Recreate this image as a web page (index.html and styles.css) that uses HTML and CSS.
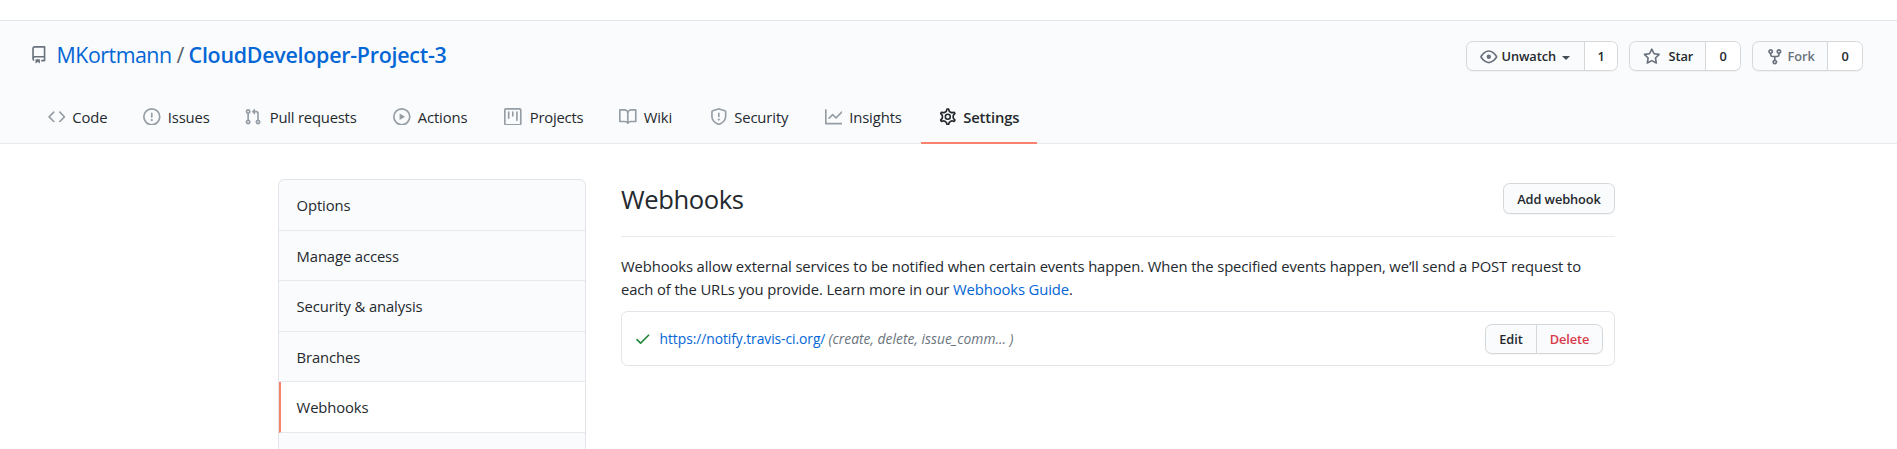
FILE: index.html
```html
<!DOCTYPE html>
<html lang="en">
<head>
<meta charset="utf-8">
<title>Webhooks</title>
<link rel="stylesheet" href="styles.css">
</head>
<body>
<header class="repo-head">
  <div class="title-row">
    <h1 class="repo-title">
      <svg class="icon repo-icon" viewBox="0 0 16 16"><path fill-rule="evenodd" d="M2 2.5A2.5 2.5 0 014.500 0h8.750a.75.75 0 01.75.75v12.500a.75.75 0 01-.75.75h-2.500a.75.75 0 110-1.500h1.750v-2h-8a1 1 0 00-.714 1.700.75.75 0 01-1.072 1.050A2.495 2.495 0 012 11.500v-9zm10.500-1V9h-8c-.356 0-.694.074-1 .208V2.500a1 1 0 011-1h8zM5 12.250v3.250a.25.25 0 00.4.2l1.450-1.087a.25.25 0 01.3 0L8.600 15.700a.25.25 0 00.4-.2v-3.250a.25.25 0 00-.25-.25h-3.500a.25.25 0 00-.25.25z"/></svg>
      <a class="owner">MKortmann</a><span class="slash">/</span><a class="repo">CloudDeveloper-Project-3</a>
    </h1>
    <div class="actions">
      <div class="btn-group watch">
        <a class="btn"><svg class="icon" viewBox="0 0 16 16"><path fill-rule="evenodd" d="M1.679 7.932c.412-.621 1.242-1.750 2.366-2.717C5.175 4.242 6.527 3.500 8 3.500c1.473 0 2.824.742 3.955 1.715 1.124.967 1.954 2.096 2.366 2.717a.119.119 0 010 .136c-.412.621-1.242 1.750-2.366 2.717C10.825 11.758 9.473 12.500 8 12.500c-1.473 0-2.824-.742-3.955-1.715C2.920 9.818 2.090 8.690 1.679 8.068a.119.119 0 010-.136zM8 2c-1.981 0-3.670.992-4.933 2.078C1.797 5.169.880 6.423.430 7.100a1.619 1.619 0 000 1.798c.450.678 1.367 1.932 2.637 3.024C4.329 13.008 6.019 14 8 14c1.981 0 3.670-.992 4.933-2.078 1.270-1.091 2.187-2.345 2.637-3.023a1.619 1.619 0 000-1.798c-.450-.678-1.367-1.932-2.637-3.023C11.671 2.992 9.981 2 8 2zm0 8a2 2 0 100-4 2 2 0 000 4z"/></svg><span>Unwatch</span><i class="caret"></i></a><a class="count">1</a>
      </div>
      <div class="btn-group star">
        <a class="btn"><svg class="icon" viewBox="0 0 16 16"><path fill-rule="evenodd" d="M8 .25a.75.75 0 01.673.418l1.882 3.815 4.210.612a.75.75 0 01.416 1.279l-3.046 2.970.719 4.192a.75.75 0 01-1.088.791L8 12.347l-3.766 1.980a.75.75 0 01-1.088-.790l.720-4.194L.818 6.374a.75.75 0 01.416-1.280l4.210-.611L7.327.668A.75.75 0 018 .25zm0 2.445L6.615 5.500a.75.75 0 01-.564.410l-3.097.450 2.240 2.184a.75.75 0 01.216.664l-.528 3.084 2.769-1.456a.75.75 0 01.698 0l2.770 1.456-.530-3.084a.75.75 0 01.216-.664l2.240-2.183-3.096-.450a.75.75 0 01-.564-.410L8 2.694v.001z"/></svg><span>Star</span></a><a class="count">0</a>
      </div>
      <div class="btn-group fork">
        <a class="btn"><svg class="icon" viewBox="0 0 16 16"><path fill-rule="evenodd" d="M5 3.250a.75.75 0 11-1.500 0 .75.75 0 011.500 0zm0 2.122a2.250 2.250 0 10-1.500 0v.878A2.250 2.250 0 005.750 8.500h1.500v2.128a2.251 2.251 0 101.500 0V8.500h1.500a2.250 2.250 0 002.250-2.250v-.878a2.250 2.250 0 10-1.500 0v.878a.75.75 0 01-.75.75h-4.500A.75.75 0 015 6.250v-.878zm3.750 7.378a.75.75 0 11-1.500 0 .75.75 0 011.500 0zm3-8.750a.75.75 0 100-1.500.75.75 0 000 1.500z"/></svg><span>Fork</span></a><a class="count">0</a>
      </div>
    </div>
  </div>
  <nav class="tabs">
    <a class="tab code"><svg class="icon" viewBox="0 0 16 16"><path fill-rule="evenodd" d="M4.720 3.220a.75.75 0 011.060 1.060L2.060 8l3.720 3.720a.75.75 0 11-1.060 1.060L.470 8.530a.75.75 0 010-1.060l4.250-4.250zm6.560 0a.75.75 0 10-1.060 1.060L13.940 8l-3.720 3.720a.75.75 0 101.060 1.060l4.250-4.250a.75.75 0 000-1.060l-4.250-4.250z"/></svg><span>Code</span></a>
    <a class="tab issues"><svg class="icon" viewBox="0 0 16 16"><path fill-rule="evenodd" d="M8 1.500a6.500 6.500 0 100 13 6.500 6.500 0 000-13zM0 8a8 8 0 1116 0A8 8 0 010 8zm9 3a1 1 0 11-2 0 1 1 0 012 0zm-.25-6.250a.75.75 0 00-1.500 0v3.500a.75.75 0 001.500 0v-3.500z"/></svg><span>Issues</span></a>
    <a class="tab pulls"><svg class="icon" viewBox="0 0 16 16"><path fill-rule="evenodd" d="M7.177 3.073L9.573.677A.25.25 0 0110 .854v4.792a.25.25 0 01-.427.177L7.177 3.427a.25.25 0 010-.354zM3.750 2.500a.75.75 0 100 1.500.75.75 0 000-1.500zm-2.250.75a2.250 2.250 0 113 2.122v5.256a2.251 2.251 0 11-1.500 0V5.372A2.250 2.250 0 011.500 3.250zM11 2.500h-1V4h1a1 1 0 011 1v5.628a2.251 2.251 0 101.500 0V5A2.500 2.500 0 0011 2.500zm1 10.250a.75.75 0 111.500 0 .75.75 0 01-1.500 0zM3.750 12a.75.75 0 100 1.500.75.75 0 000-1.500z"/></svg><span>Pull requests</span></a>
    <a class="tab acts"><svg class="icon" viewBox="0 0 16 16"><path fill-rule="evenodd" d="M1.500 8a6.500 6.500 0 1113 0 6.500 6.500 0 01-13 0zM8 0a8 8 0 100 16A8 8 0 008 0zM6.379 5.227A.25.25 0 006 5.442v5.117a.25.25 0 00.379.214l4.264-2.559a.25.25 0 000-.428L6.379 5.227z"/></svg><span>Actions</span></a>
    <a class="tab projects"><svg class="icon" viewBox="0 0 16 16"><path fill-rule="evenodd" d="M1.750 0A1.750 1.750 0 000 1.750v12.500C0 15.216.784 16 1.750 16h12.500A1.750 1.750 0 0016 14.250V1.750A1.750 1.750 0 0014.250 0H1.750zM1.500 1.750a.25.25 0 01.25-.25h12.500a.25.25 0 01.25.25v12.500a.25.25 0 01-.25.25H1.750a.25.25 0 01-.25-.25V1.750zM11.750 3a.75.75 0 00-.75.75v7.500a.75.75 0 001.500 0v-7.500a.75.75 0 00-.75-.75zm-8.250.75a.75.75 0 011.500 0v5.500a.75.75 0 01-1.500 0v-5.500zM8 3a.75.75 0 00-.75.75v3.500a.75.75 0 001.500 0v-3.500A.75.75 0 008 3z"/></svg><span>Projects</span></a>
    <a class="tab wiki"><svg class="icon" viewBox="0 0 16 16"><path fill-rule="evenodd" d="M0 1.750A.75.75 0 01.75 1h4.253c1.227 0 2.317.590 3 1.501A3.744 3.744 0 0111.006 1h4.245a.75.75 0 01.75.75v10.500a.75.75 0 01-.75.75h-4.507a2.250 2.250 0 00-1.591.659l-.622.621a.75.75 0 01-1.060 0l-.622-.621A2.250 2.250 0 005.258 13H.75a.75.75 0 01-.75-.75V1.750zm8.755 3a2.250 2.250 0 012.250-2.250H14.500v9h-3.757c-.710 0-1.400.201-1.992.572l.004-7.322zm-1.504 7.324l.004-5.073-.002-2.253A2.250 2.250 0 005.003 2.500H1.500v9h3.757a3.750 3.750 0 011.994.574z"/></svg><span>Wiki</span></a>
    <a class="tab security"><svg class="icon" viewBox="0 0 16 16"><path fill-rule="evenodd" d="M7.467.133a1.750 1.750 0 011.066 0l5.250 1.680A1.750 1.750 0 0115 3.480V7c0 1.566-.320 3.182-1.303 4.682-.983 1.498-2.585 2.813-5.032 3.855a1.700 1.700 0 01-1.330 0c-2.447-1.042-4.049-2.357-5.032-3.855C1.320 10.182 1 8.566 1 7V3.480a1.750 1.750 0 011.217-1.667l5.250-1.680zm.610 1.429a.25.25 0 00-.153 0l-5.250 1.680a.25.25 0 00-.174.238V7c0 1.358.275 2.666 1.057 3.860.784 1.194 2.121 2.340 4.366 3.297a.2.2 0 00.154 0c2.245-.956 3.582-2.104 4.366-3.298C13.225 9.666 13.500 8.360 13.500 7V3.480a.25.25 0 00-.174-.237l-5.250-1.680zM9 10.500a1 1 0 11-2 0 1 1 0 012 0zm-.25-5.750a.75.75 0 10-1.500 0v3a.75.75 0 001.500 0v-3z"/></svg><span>Security</span></a>
    <a class="tab insights"><svg class="icon" viewBox="0 0 16 16"><path fill-rule="evenodd" d="M1.500 1.750a.75.75 0 00-1.500 0v12.500c0 .414.336.75.75.75h14.500a.75.75 0 000-1.500H1.500V1.750zm14.280 2.530a.75.75 0 00-1.060-1.060L10 7.940 7.530 5.470a.75.75 0 00-1.060 0L3.220 8.720a.75.75 0 001.060 1.060L7 7.060l2.470 2.470a.75.75 0 001.060 0l5.250-5.250z"/></svg><span>Insights</span></a>
    <a class="tab settings selected"><svg class="icon" viewBox="0 0 16 16"><g fill="none" stroke="currentColor" stroke-width="1.4"><path transform="translate(8 8) scale(1.09) translate(-8 -8)" d="M7.429 1.525a6.593 6.593 0 011.142 0c.036.003.108.036.137.146l.289 1.105c.147.56.55.967.997 1.189.174.086.341.183.501.29.417.278.97.423 1.530.27l1.102-.303c.110-.030.175.016.195.046.219.310.410.641.573.989.014.031.022.110-.059.190l-.815.806c-.411.406-.562.957-.530 1.456a4.588 4.588 0 010 .582c-.032.499.119 1.050.530 1.456l.815.806c.080.080.073.159.059.190a6.494 6.494 0 01-.573.990c-.020.029-.086.074-.195.045l-1.103-.303c-.559-.153-1.112-.008-1.529.270-.160.107-.327.204-.500.290-.449.222-.851.628-.998 1.189l-.289 1.105c-.029.110-.101.143-.137.146a6.613 6.613 0 01-1.142 0c-.036-.003-.108-.037-.137-.146l-.289-1.105c-.147-.560-.550-.967-.997-1.189a4.502 4.502 0 01-.501-.290c-.417-.278-.970-.423-1.530-.270l-1.102.303c-.110.030-.175-.016-.195-.046a6.492 6.492 0 01-.573-.989c-.014-.031-.022-.110.059-.190l.815-.806c.411-.406.562-.957.530-1.456a4.587 4.587 0 010-.582c.032-.499-.119-1.050-.530-1.456l-.815-.806c-.080-.080-.073-.159-.059-.190a6.440 6.440 0 01.573-.990c.020-.029.086-.075.195-.045l1.103.303c.559.153 1.112.008 1.529-.270.160-.107.327-.204.500-.290.449-.222.851-.628.998-1.189l.289-1.105c.029-.110.101-.143.137-.146z"/><circle cx="8" cy="8" r="2.250"/></g></svg><span>Settings</span></a>
  </nav>
</header>
<main class="page">
  <aside class="menu">
    <a>Options</a>
    <a>Manage access</a>
    <a>Security &amp; analysis</a>
    <a>Branches</a>
    <a class="current">Webhooks</a>
    <div class="menu-rest"></div>
  </aside>
  <section class="content">
    <div class="subhead">
      <h2>Webhooks</h2>
      <a class="btn add">Add webhook</a>
    </div>
    <p class="intro"><span class="l1">Webhooks allow external services to be notified when certain events happen. When the specified events happen, we’ll send a POST request to</span><br><span class="l2">each of the URLs you provide. Learn more in our <a class="link">Webhooks Guide</a>.</span></p>
    <div class="hook">
      <svg class="icon check" viewBox="0 0 16 16"><path fill-rule="evenodd" d="M13.780 4.220a.75.75 0 010 1.060l-7.250 7.250a.75.75 0 01-1.060 0L2.220 9.280a.75.75 0 011.060-1.060L6 10.940l6.720-6.720a.75.75 0 011.060 0z"/></svg>
      <a class="url">https://notify.travis-ci.org/</a>
      <em class="events">(create, delete, issue_comm... )</em>
      <div class="btn-group hook-actions"><a class="btn">Edit</a><a class="btn danger">Delete</a></div>
    </div>
  </section>
</main>
</body>
</html>
```
FILE: styles.css
```css
* { box-sizing: border-box; }
body {
  margin: 0;
  height: 449px;
  overflow: hidden;
  background: #fff;
  color: #24292e;
  font: 14.8px/23.1px "Open Sans", "Noto Sans", sans-serif;
  letter-spacing: -.11px;
}
.icon { width: 17.6px; height: 17.6px; flex: none; fill: currentColor; }
span, a, em { white-space: nowrap; }

.repo-head {
  margin-top: 20px;
  height: 124px;
  display: flex;
  flex-direction: column;
  justify-content: space-between;
  background: #fafbfc;
  border-top: 1px solid #e1e4e8;
  border-bottom: 1px solid #e8eaed;
}
.title-row {
  display: flex;
  justify-content: space-between;
  padding: 17px 34px 0 30px;
}
.repo-title {
  display: flex;
  align-items: center;
  margin: 0;
  height: 34px;
  font-size: 21.4px;
  font-weight: 400;
  color: #0366d6;
}
.repo-icon { color: #6a737d; margin-right: 9px; }
.owner { width: 119px; letter-spacing: -.5px; }
.slash { width: 13px; padding-left: 1px; color: #586069; }
.repo { font-weight: 600; letter-spacing: -.25px; }

.actions { display: flex; gap: 11px; margin-top: 3px; height: 30px; }
.btn-group {
  display: flex;
  height: 30px;
  border: 1px solid #d5d8da;
  border-radius: 6.6px;
  background: #fafbfc;
  box-shadow: 0 1px 0 rgba(27, 31, 35, .04);
  overflow: hidden;
}
.btn, .count {
  display: flex;
  align-items: center;
  padding-top: 1px;
  font-size: 12.8px;
  font-weight: 600;
  letter-spacing: -.1px;
}
.btn .icon { color: #6a737d; }
.count { flex: 1; justify-content: center; background: #fff; border-left: 1px solid #d5d8da; }
.watch { width: 152px; }
.watch .btn { width: 117px; padding-left: 13px; gap: 4px; }
.watch span { width: 52px; }
.caret { margin: 2px 0 0 4px; border: 4.400px solid transparent; border-top-color: #444d56; border-bottom: 0; }
.star { width: 112px; }
.star .btn { width: 75px; padding-left: 13px; gap: 8px; }
.fork { width: 111px; }
.fork .btn { width: 74px; padding-left: 13px; gap: 4px; color: #6a737d; }

.tabs { display: flex; height: 53px; padding-left: 30px; margin-bottom: -1px; }
.tab {
  display: flex;
  align-items: center;
  gap: 7px;
  padding-left: 17.6px;
  border-bottom: 2px solid transparent;
}
.tab span { padding-top: 2px; }
.tab .icon { color: #959da5; }
.tab.code { width: 95.5px; }
.tab.issues { width: 101px; }
.tab.pulls { width: 149px; gap: 8px; letter-spacing: -.2px; }
.tab.acts { width: 111px; }
.tab.projects { width: 115px; gap: 8px; letter-spacing: -.2px; }
.tab.wiki { width: 90.5px; }
.tab.security { width: 115px; }
.tab.insights { width: 114px; }
.tab.settings { width: 116px; }
.tab.selected { font-weight: 600; letter-spacing: -.15px; border-bottom-color: #f9826c; }
.tab.selected .icon { color: #24292e; }

.page { display: flex; gap: 35px; width: 1337px; height: 270px; margin: 35px 0 0 278px; }
.menu {
  width: 308px;
  flex: none;
  border: 1px solid #e1e4e8;
  border-bottom: 0;
  border-radius: 6.6px 6.6px 0 0;
  background: #fafbfc;
  overflow: hidden;
}
.menu a {
  display: block;
  height: 50.5px;
  padding: 14px 17.6px 0;
  border-bottom: 1px solid #e6e9ec;
}
.menu .current { background: #fff; border-left: 2px solid #f9826c; padding-left: 15.6px; }
.menu-rest { height: 16px; }

.content { flex: 1; }
.subhead {
  display: flex;
  justify-content: space-between;
  height: 58px;
  border-bottom: 1px solid #e8eaed;
}
h2 { margin: 0; font-size: 25.6px; line-height: 42px; font-weight: 400; letter-spacing: -.4px; }
.add {
  width: 112px;
  height: 31px;
  margin-top: 4px;
  padding-top: 2px;
  justify-content: center;
  border: 1px solid #d5d8da;
  border-radius: 6.6px;
  background: #fafbfc;
  box-shadow: 0 1px 0 rgba(27, 31, 35, .04);
}
.intro { margin: 18px 0 0; }
.link, .url { color: #0366d6; }
.hook {
  display: flex;
  align-items: center;
  height: 55px;
  margin-top: 10px;
  padding: 0 11px 0 12px;
  border: 1px solid #e1e4e8;
  border-radius: 6.6px;
}
.check { color: #22863a; margin-right: 8px; }
.url { width: 169px; font-size: 13.8px; letter-spacing: -.05px; }
.events { color: #6a737d; font-size: 13.8px; letter-spacing: .03px; }
.hook-actions { margin-left: auto; width: 118px; }
.hook-actions .btn { width: 50px; justify-content: center; }
.hook-actions .danger { flex: 1; color: #d73a49; border-left: 1px solid #d5d8da; }
```
